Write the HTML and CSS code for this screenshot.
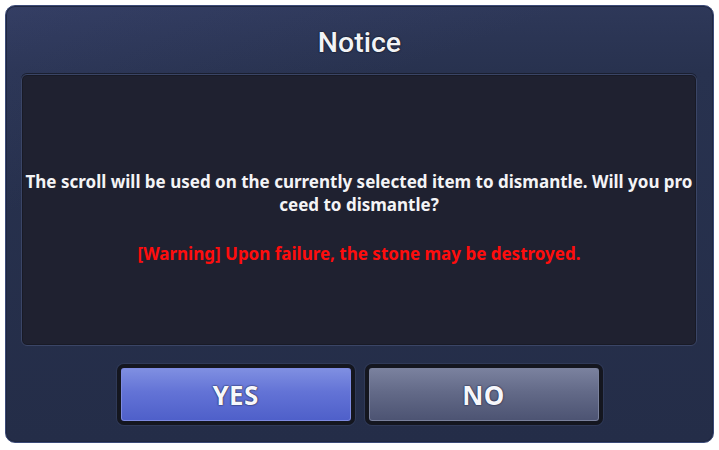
FILE: index.html
```html
<!DOCTYPE html>
<html>
<head>
<meta charset="utf-8">
<link rel="stylesheet" href="styles.css">
</head>
<body>
<div class="dialog">
  <div class="header"><h1 class="title">Notice</h1></div>
  <div class="panel">
    <p class="msg">The scroll will be used on the currently selected item to dismantle. Will you pro<br>ceed to dismantle?</p>
    <p class="warn">[Warning] Upon failure, the stone may be destroyed.</p>
  </div>
  <div class="actions">
    <button class="btn btn-yes"><span>YES</span></button>
    <button class="btn btn-no"><span>NO</span></button>
  </div>
</div>
</body>
</html>
```
FILE: styles.css
```css
html, body { margin: 0; padding: 0; background: #ffffff; }
body { padding: 5px; width: 719px; height: 450px; box-sizing: border-box; }
.dialog {
  width: 709px; height: 438px; box-sizing: border-box;
  border: 1px solid #3b4a78;
  border-radius: 10px;
  background:
    linear-gradient(160deg, rgba(80,90,150,0.18) 0%, rgba(80,90,150,0.0) 30%),
    linear-gradient(180deg, #2e3859 0%, #28324f 15%, #242d48 100%);
  box-shadow: inset 0 0 0 1px #1f2740;
  display: flex; flex-direction: column;
  font-family: "Noto Sans", "Open Sans", sans-serif;
  overflow: hidden;
}
.header {
  height: 68px; display: flex; align-items: center; justify-content: center;
  flex: none;
}
.title {
  margin: 0; margin-top: 4px;
  font-family: Roboto, "Noto Sans", sans-serif; font-weight: 500;
  font-size: 28.5px; color: #f2f3f6;
  text-shadow: 0 0 2px #10131e, 0 0 1px #10131e;
}
.panel {
  margin: 0 16px 0 15px;
  height: 272px; box-sizing: border-box; flex: none;
  background: #1f2130;
  border: 1px solid #3a4566;
  border-radius: 6px;
  box-shadow: 0 -1px 0 #1a1f30, inset 0 0 0 1px #181a26;
  display: flex; flex-direction: column; align-items: center; justify-content: center;
  text-align: center;
  padding-top: 14px;
}
.msg {
  margin: 0; color: #f4f4f6; font-weight: 700; font-size: 17px; line-height: 23px;
}
.warn {
  margin: 26px 0 0; color: #ff0d0d; font-weight: 700; font-size: 17px; line-height: 23px;
}
.actions {
  flex: 1; display: flex; justify-content: center; align-items: flex-start;
  gap: 10px; padding-top: 18px;
}
.btn {
  width: 238px; height: 61px; box-sizing: border-box;
  border: 4px solid #14161f; border-radius: 7px; padding: 0;
  font-family: "Noto Sans", "Open Sans", sans-serif; font-weight: 700; font-size: 26px;
  color: #f6f7fb; letter-spacing: 0.3px;
  text-shadow: 0 0 2px #1a1f40, 0 0 1px #1a1f40;
  box-shadow: 0 0 0 1px #2f3957;
  display: flex; align-items: center; justify-content: center;
}
.btn-yes {
  background:
    linear-gradient(180deg, #8090e2 0%, #6373d6 45%, #4e5fc9 100%);
  box-shadow: 0 0 0 1px #2f3957, inset 0 0 0 1px #7d8ae0;
}
.btn-no {
  background: linear-gradient(180deg, #7b829f 0%, #636a88 45%, #4c5372 100%);
  box-shadow: 0 0 0 1px #2f3957, inset 0 0 0 1px #7a819c;
}
```
